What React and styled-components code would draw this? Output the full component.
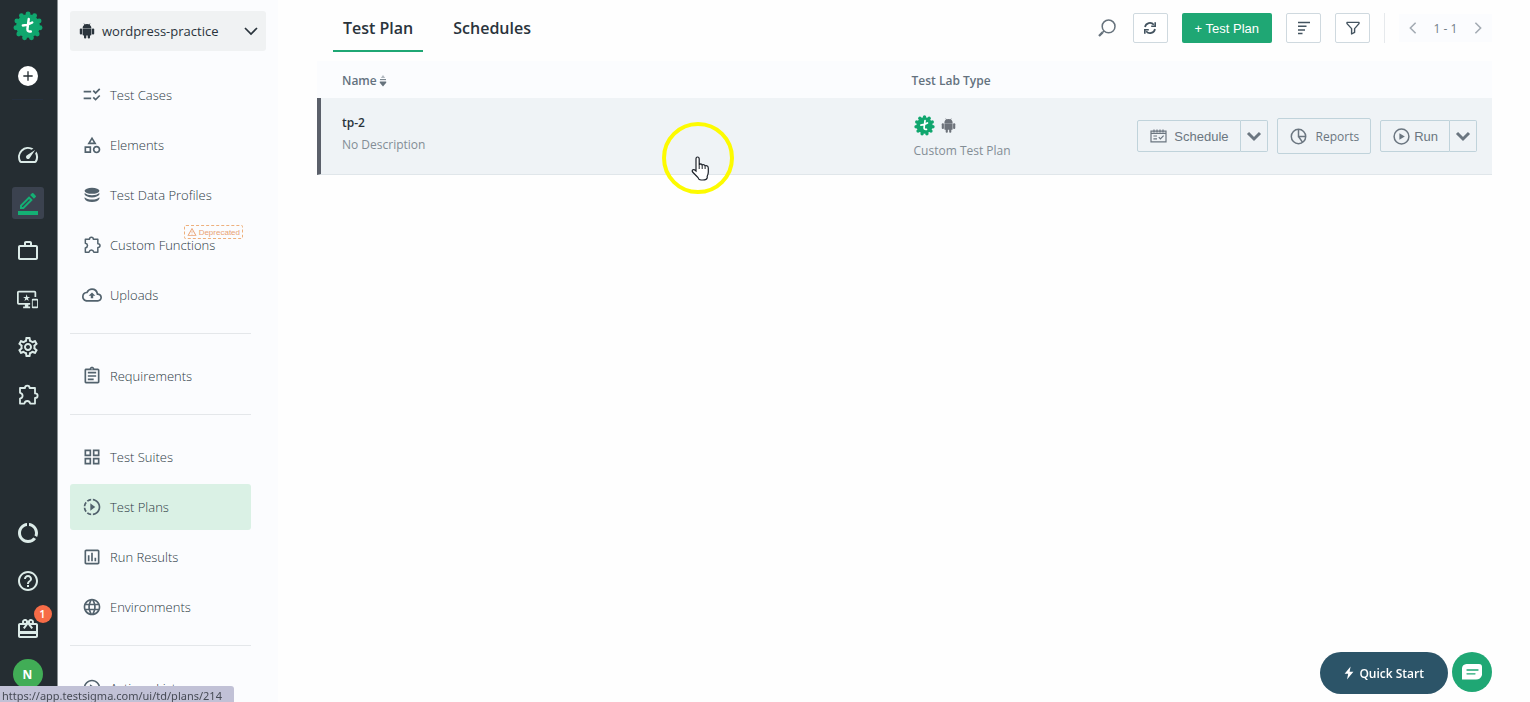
import React from 'react';
import styled, { createGlobalStyle } from 'styled-components';
import {
  MdAdd,
  MdChecklistRtl,
  MdDataUsage,
  MdGridView,
  MdHelpOutline,
  MdLanguage,
  MdOutlineAssignment,
  MdOutlineBackup,
  MdOutlineBorderColor,
  MdOutlineCardGiftcard,
  MdOutlineCategory,
  MdOutlineImportantDevices,
  MdOutlineInsertChart,
  MdOutlinePlayCircle,
  MdOutlineSettings,
  MdOutlineSlowMotionVideo,
  MdOutlineSpeed,
  MdOutlineWarningAmber,
  MdOutlineWorkOutline,
} from 'react-icons/md';

const GlobalStyle = createGlobalStyle`
*{
  box-sizing: border-box;
}
body{
  margin: 0;
  background-color: #fefefe;
  color: #2a343c;
  font-family: "Open Sans", "Noto Sans", sans-serif;
  font-size: 13px;
}
button{
  font-family: inherit;
  cursor: pointer;
}
svg{
  display: block;
  flex: none;
}
`

const LogoIcon = ({ size }) => {
  const bumps = [];
  for (let i = 0; i < 11; i++){
    const a = (i / 11) * Math.PI * 2 - Math.PI / 2;
    bumps.push(<circle key={i} cx={16 + Math.cos(a) * 13} cy={16 + Math.sin(a) * 13} r="2.6" />)
  }
  return (
    <svg width={size} height={size} viewBox="0 0 32 32" fill="#10a66e">
      <circle cx="16" cy="16" r="12.6" />
      {bumps}
      <path d="M16.8 8.5 L15.4 19 Q15.2 22.6 19 21.8 M10.5 15.4 Q16 15 20.5 12.2" fill="none" stroke="#fff" strokeWidth="2.6" strokeLinecap="round" />
    </svg>
  );
};

const AndroidIcon = ({ size }) => (
  <svg width={size} height={size} viewBox="0 0 16 16" fill="currentColor">
    <path d="M3.6 5.2 A4.4 4.2 0 0 1 12.4 5.2 Z" />
    <path d="M5 .6 L6.1 2.2 M11 .6 L9.9 2.2" stroke="currentColor" strokeWidth=".8" />
    <path d="M3.6 5.6 H12.4 V11.6 Q12.4 12.6 11.4 12.6 H4.6 Q3.6 12.6 3.6 11.6 Z" />
    <rect x=".8" y="5.6" width="2.3" height="6" rx="1" />
    <rect x="12.9" y="5.6" width="2.3" height="6" rx="1" />
    <rect x="5" y="11" width="2.3" height="4.6" rx="1" />
    <rect x="8.7" y="11" width="2.3" height="4.6" rx="1" />
  </svg>
);

const DatabaseIcon = () => (
  <svg width="20" height="20" viewBox="0 0 20 20" fill="currentColor">
    <ellipse cx="10" cy="5.8" rx="7.4" ry="3" />
    <path d="M2.6 8 Q5 10.2 10 10.2 T17.4 8 V9.6 Q15.6 12.4 10 12.4 T2.6 9.6 Z" />
    <path d="M2.6 12.2 Q5 14.6 10 14.6 T17.4 12.2 V13.8 Q15.6 17 10 17 T2.6 13.8 Z" />
  </svg>
);

const PuzzleIcon = ({ size }) => (
  <svg width={size} height={size} viewBox="0 0 24 24" fill="none" stroke="currentColor" strokeWidth="1.8" strokeLinejoin="round">
    <path d="M4 5 H9 Q9 2.6 11.3 2.6 T13.6 5 H19 V10.4 Q21.6 10.4 21.6 12.7 T19 15 V20.6 H14.2 Q13.6 18 11.3 18 T8.4 20.6 H4 V15.6 Q6.6 15 6.6 12.7 T4 9.8 Z" />
  </svg>
);

const ChevronIcon = ({ dir, size, weight }) => {
  const paths = {
    down: 'M2 5 L8 11 L14 5',
    left: 'M11 2 L5 8 L11 14',
    right: 'M5 2 L11 8 L5 14',
  };
  return (
    <svg width={size} height={size} viewBox="0 0 16 16" fill="none" stroke="currentColor" strokeWidth={weight}>
      <path d={paths[dir]} />
    </svg>
  );
};

const SearchIcon = () => (
  <svg width="20" height="20" viewBox="0 0 20 20" fill="none" stroke="#66727c" strokeWidth="1.5">
    <circle cx="11.6" cy="8.4" r="6.4" />
    <path d="M7 13 L5.4 14.6" />
    <path d="M5.6 14.4 L2 18" strokeWidth="2.2" />
  </svg>
);

const RefreshIcon = () => (
  <svg width="14" height="14" viewBox="0 0 14 14" fill="none" stroke="#43535f" strokeWidth="1.7">
    <path d="M2 6 A5 5 0 0 1 10.8 3.8 M12 8 A5 5 0 0 1 3.2 10.2" />
    <path d="M12.2 1.2 V5.2 H8.2 M1.8 12.8 V8.8 H5.8" strokeWidth="1.6" />
  </svg>
);

const SortIcon = () => (
  <svg width="14" height="14" viewBox="0 0 14 14" fill="none" stroke="#43535f" strokeWidth="1.5">
    <path d="M1 1.5 H13 M1 5.2 H9.5 M1 9 H8 M1 12.6 H5.5" />
  </svg>
);

const FilterIcon = () => (
  <svg width="14" height="14" viewBox="0 0 14 14" fill="none" stroke="#43535f" strokeWidth="1.4" strokeLinejoin="round">
    <path d="M1 1.4 H13 V2.6 L8.6 7.6 V11.4 L5.6 13 V7.6 L1 2.6 Z" />
  </svg>
);

const CalendarIcon = () => (
  <svg width="17" height="14" viewBox="0 0 17 14" fill="none" stroke="currentColor" strokeWidth="1.2">
    <path d="M1 2.2 H16 V12.8 H1 Z M1 4.4 H16" />
    <path d="M4 .4 V3.4 M7 .4 V3.4 M10 .4 V3.4 M13 .4 V3.4" />
    <path d="M3.4 7 H7 M3.4 9.8 H7 M8.8 8.2 L10.4 9.8 L13.6 6.6" />
  </svg>
);

const PieIcon = () => (
  <svg width="17" height="17" viewBox="0 0 17 17" fill="none" stroke="currentColor" strokeWidth="1.5">
    <circle cx="8.5" cy="8.5" r="7.2" />
    <path d="M8.5 1.2 V8.5 H15.8 M8.5 8.5 L12.6 14.4" />
  </svg>
);

const PlayIcon = () => (
  <svg width="17" height="17" viewBox="0 0 17 17" fill="none" stroke="currentColor" strokeWidth="1.5">
    <circle cx="8.5" cy="8.5" r="7.4" />
    <path d="M6.4 5.2 V11.8 L11.8 8.5 Z" fill="currentColor" stroke="none" />
  </svg>
);

const SortArrows = () => (
  <svg width="8" height="13" viewBox="0 0 8 13">
    <path d="M4 1 L6.2 4 H1.8 Z" fill="#b3bac1" />
    <path d="M1 5.6 H7" stroke="#77838d" strokeWidth="1.1" />
    <path d="M.8 7.4 H7.2 V8.8 L4 12.4 L.8 8.8 Z" fill="#66727c" />
  </svg>
);

const BoltIcon = () => (
  <svg width="10" height="14" viewBox="0 0 10 14" fill="#fff">
    <path d="M6.6 .6 L.6 7.8 H4.2 L3 13.4 L9.4 5.8 H5.6 Z" />
  </svg>
);

const ChatIcon = () => (
  <svg width="22" height="18" viewBox="0 0 22 18">
    <path d="M5.5 1 H18 Q21 1 21 4 V12 Q19.5 16.6 15 16.6 H1 V5 Q1.4 1.4 5.5 1 Z" fill="#fff" />
    <path d="M6 7 H17 M6 10.8 H14" stroke="#1fa774" strokeWidth="1.3" strokeLinecap="round" />
  </svg>
);

const HandIcon = () => (
  <svg width="20" height="26" viewBox="0 0 20 26">
    <path d="M5 3 Q5 1 6.5 1 Q8.2 1 8.2 3 V9.6 Q8.2 7.9 9.6 7.9 Q11 8 11.2 9.6 Q11.4 8.4 12.5 8.6 Q13.9 8.7 14.1 10.4 Q14.4 9.3 15.5 9.6 Q17.3 10 17.3 12 V16 Q17.3 18.4 16.2 20.2 V21.8 Q15.6 24 12 24 H10 Q7.6 23.8 7 21.6 L1.6 16 Q.6 14.6 2 13.8 Q3.2 13.4 5 15 Z" fill="#fff" stroke="#1b2028" strokeWidth="1.2" />
    <path d="M8.2 9.4 V13 M11.2 9.6 V13 M14.1 10.4 V13" stroke="#1b2028" strokeWidth="1" />
  </svg>
);

const railTop = [
  { label: 'Dashboard', icon: MdOutlineSpeed },
  { label: 'Create Tests', icon: MdOutlineBorderColor, active: true },
  { label: 'Projects', icon: MdOutlineWorkOutline },
  { label: 'Test Lab', icon: MdOutlineImportantDevices, size: 21 },
  { label: 'Settings', icon: MdOutlineSettings },
  { label: 'Addons', icon: PuzzleIcon },
];

const railBottom = [
  { label: 'Usage', icon: MdDataUsage },
  { label: 'Help', icon: MdHelpOutline },
  { label: 'What is new', icon: MdOutlineCardGiftcard, count: 1 },
];

const menuGroups = [
  [
    { label: 'Test Cases', icon: MdChecklistRtl },
    { label: 'Elements', icon: MdOutlineCategory },
    { label: 'Test Data Profiles', icon: DatabaseIcon },
    { label: 'Custom Functions', icon: PuzzleIcon, deprecated: true },
    { label: 'Uploads', icon: MdOutlineBackup },
  ],
  [
    { label: 'Requirements', icon: MdOutlineAssignment },
  ],
  [
    { label: 'Test Suites', icon: MdGridView },
    { label: 'Test Plans', icon: MdOutlineSlowMotionVideo, active: true },
    { label: 'Run Results', icon: MdOutlineInsertChart },
    { label: 'Environments', icon: MdLanguage },
  ],
  [
    { label: 'Actions List', icon: MdOutlinePlayCircle },
  ],
];

const RailList = ({ items }) => items.map((item) => {
  const Icon = item.icon;
  return (
    <RailSlot key={item.label}>
      <RailLink href="#" aria-label={item.label} $active={item.active}>
        <Icon size={item.size || 24} />
        {item.count && <Count>{item.count}</Count>}
      </RailLink>
    </RailSlot>
  );
});

const SideMenu = () => (
  <Side>
    <AppPicker type="button">
      <AndroidIcon size={16} />
      <AppName>wordpress-practice</AppName>
      <ChevronIcon dir="down" size={16} weight={1.7} />
    </AppPicker>
    {menuGroups.map((group, i) => (
      <MenuGroup key={i}>
        {group.map((item) => {
          const Icon = item.icon;
          return (
            <MenuLink key={item.label} href="#" $active={item.active}>
              <Icon size={20} />
              {item.label}
              {item.deprecated && <Deprecated><MdOutlineWarningAmber size={10} />Deprecated</Deprecated>}
            </MenuLink>
          );
        })}
      </MenuGroup>
    ))}
  </Side>
);

const PlanTable = () => (
  <Table>
    <thead>
      <tr>
        <Th $width="50.6%"><ThLabel>Name<SortArrows /></ThLabel></Th>
        <Th $width="17%">Test Lab Type</Th>
        <Th aria-label="Actions" />
      </tr>
    </thead>
    <tbody>
      <Row>
        <Td>
          <PlanName href="#">tp-2</PlanName>
          <Muted>No Description</Muted>
        </Td>
        <Td $padding="0 0 0 2px">
          <LabIcons><LogoIcon size={21} /><AndroidIcon size={15} /></LabIcons>
          <Muted>Custom Test Plan</Muted>
        </Td>
        <Td $padding="0 15px 0 0">
          <Actions>
            <Split>
              <ActionButton type="button"><CalendarIcon />Schedule</ActionButton>
              <ArrowButton type="button" aria-label="Schedule options"><ChevronIcon dir="down" size={16} weight={3} /></ArrowButton>
            </Split>
            <ReportsButton type="button"><PieIcon />Reports</ReportsButton>
            <Split>
              <ActionButton type="button" $tight><PlayIcon />Run</ActionButton>
              <ArrowButton type="button" aria-label="Run options"><ChevronIcon dir="down" size={16} weight={3} /></ArrowButton>
            </Split>
          </Actions>
        </Td>
      </Row>
    </tbody>
  </Table>
);

const App = () => {
  return (
    <>
      <GlobalStyle />
      <Page>
        <Rail>
          <LogoIcon size={30} />
          <AddButton type="button" aria-label="Add"><MdAdd size={16} /></AddButton>
          <RailLine />
          <RailNav><RailList items={railTop} /></RailNav>
          <RailFoot><RailList items={railBottom} /></RailFoot>
          <Avatar type="button">N</Avatar>
        </Rail>
        <SideMenu />
        <Main>
          <TopBar>
            <Tabs>
              <Tab href="#" $active>Test Plan</Tab>
              <Tab href="#">Schedules</Tab>
            </Tabs>
            <Tools>
              <SearchButton type="button" aria-label="Search"><SearchIcon /></SearchButton>
              <ToolButton type="button" aria-label="Refresh"><RefreshIcon /></ToolButton>
              <NewButton type="button">+ Test Plan</NewButton>
              <ToolButton type="button" aria-label="Sort"><SortIcon /></ToolButton>
              <ToolButton type="button" aria-label="Filter"><FilterIcon /></ToolButton>
              <ToolLine />
              <Pager>
                <PlainButton type="button" aria-label="Previous page"><ChevronIcon dir="left" size={14} weight={1.8} /></PlainButton>
                <span>1 - 1</span>
                <PlainButton type="button" aria-label="Next page"><ChevronIcon dir="right" size={14} weight={1.8} /></PlainButton>
              </Pager>
            </Tools>
          </TopBar>
          <PlanTable />
        </Main>
      </Page>
      <Floating>
        <QuickStart type="button"><BoltIcon />Quick Start</QuickStart>
        <ChatButton type="button" aria-label="Chat"><ChatIcon /></ChatButton>
      </Floating>
      <Halo />
      <Pointer><HandIcon /></Pointer>
      <StatusUrl>https://app.testsigma.com/ui/td/plans/214</StatusUrl>
    </>
  );
};

const Page = styled.div`
display: flex;
height: 100vh;
overflow: hidden;
`
const Rail = styled.nav`
display: flex;
flex-direction: column;
align-items: center;
flex: none;
width: 58px;
padding: 11px 2px 13px 0;
background-color: #252d32;
border-right: 1px solid #8b9194;
`
const AddButton = styled.button`
display: flex;
align-items: center;
justify-content: center;
width: 20px;
height: 20px;
margin-top: 25px;
padding: 0;
border: none;
border-radius: 50%;
background-color: #fff;
color: #252d32;
`
const RailLine = styled.div`
width: 31px;
height: 1px;
margin: 13px 0 31px;
background-color: #25303f;
`
const RailNav = styled.div`
display: flex;
flex-direction: column;
`
const RailFoot = styled(RailNav)`
margin-top: auto;
`
const RailSlot = styled.div`
display: flex;
align-items: center;
height: 48px;
`
const RailLink = styled.a`
position: relative;
display: flex;
align-items: center;
justify-content: center;
width: 32px;
height: 32px;
border-radius: 3px;
background-color: ${(props) => props.$active ? '#3b424f' : 'transparent'};
color: ${(props) => props.$active ? '#14b074' : '#dcebe8'};
`
const Count = styled.span`
position: absolute;
top: -8px;
right: -8px;
width: 18px;
height: 18px;
border-radius: 50%;
background-color: #f76c47;
color: #fff;
font-size: 11px;
font-weight: 600;
line-height: 18px;
text-align: center;
`
const Avatar = styled.button`
width: 30px;
height: 30px;
margin-top: 6px;
padding: 0;
border: none;
border-radius: 50%;
background-color: #41ad56;
color: #fff;
font-size: 12px;
font-weight: 700;
`
const Side = styled.aside`
flex: none;
width: 220px;
padding: 11px 12px 0;
background-color: #fbfcfe;
overflow: hidden;
`
const AppPicker = styled.button`
display: flex;
align-items: center;
gap: 7px;
width: 100%;
height: 40px;
margin-bottom: 21px;
padding: 0 7px 0 9px;
border: none;
border-radius: 3px;
background-color: #f0f2f3;
color: #2a343c;
`
const AppName = styled.span`
flex: 1;
font-size: 13px;
font-weight: 500;
text-align: left;
`
const MenuGroup = styled.div`
display: flex;
flex-direction: column;
gap: 4px;
width: 181px;
& + &{
  margin-top: 15px;
  padding-top: 19px;
  border-top: 1px solid #e4e7ea;
}
`
const MenuLink = styled.a`
position: relative;
display: flex;
align-items: center;
gap: 8px;
height: 46px;
padding-left: 12px;
border-radius: 3px;
background-color: ${(props) => props.$active ? '#daf1e5' : 'transparent'};
color: #2c3a44;
font-size: 13px;
font-weight: 300;
text-decoration: none;
& > svg{
  color: #52626d;
}
`
const Deprecated = styled.span`
position: absolute;
top: 3px;
right: 8px;
display: flex;
align-items: center;
gap: 2px;
height: 14px;
padding: 0 2px;
border: 1px dashed #eeb07c;
border-radius: 2px;
color: #e9a273;
font-family: "Liberation Sans", Arial, sans-serif;
font-size: 8px;
font-weight: 400;
`
const Main = styled.main`
flex: 1;
min-width: 0;
padding: 0 38px 0 39px;
`
const TopBar = styled.header`
display: flex;
justify-content: space-between;
height: 61px;
`
const Tabs = styled.div`
display: flex;
gap: 20px;
padding-left: 16px;
`
const Tab = styled.a`
height: 52px;
padding: 0 10px;
border-bottom: 2px solid ${(props) => props.$active ? '#1fa774' : 'transparent'};
color: #2a343c;
font-size: 16px;
font-weight: 600;
line-height: 56px;
text-decoration: none;
`
const Tools = styled.div`
display: flex;
align-items: center;
gap: 14px;
height: 56px;
`
const PlainButton = styled.button`
padding: 0;
border: none;
background: none;
color: #a3abb3;
`
const SearchButton = styled(PlainButton)`
padding-right: 2px;
`
const ToolButton = styled.button`
display: flex;
align-items: center;
justify-content: center;
width: 35px;
height: 30px;
padding: 0;
border: 1px solid #cfd9df;
border-radius: 2px;
background-color: #fff;
`
const NewButton = styled.button`
height: 30px;
padding: 0 13px;
border: none;
border-radius: 2px;
background-color: #1fa774;
color: #fff;
font-family: "Liberation Sans", Arial, sans-serif;
font-size: 13px;
`
const ToolLine = styled.div`
width: 1px;
height: 30px;
background-color: #e6e9ec;
`
const Pager = styled.div`
display: flex;
align-items: center;
justify-content: space-between;
width: 93px;
height: 28px;
padding: 0 7px;
background-color: #fbfcfe;
color: #737e88;
font-size: 12px;
`
const Table = styled.table`
width: 100%;
border-collapse: separate;
border-spacing: 0;
table-layout: fixed;
`
const Th = styled.th`
width: ${(props) => props.$width || 'auto'};
height: 37px;
padding: 2px 0 0;
background-color: #fbfcfe;
color: #64727e;
font-size: 12px;
font-weight: 600;
text-align: left;
&:first-child{
  padding-left: 25px;
}
`
const ThLabel = styled.span`
display: flex;
align-items: center;
gap: 2px;
`
const Td = styled.td`
height: 77px;
padding: ${(props) => props.$padding || '0 0 4px'};
border-bottom: 1px solid #e0e6ea;
&:first-child{
  padding-left: 21px;
  border-left: 4px solid #5b606a;
}
`
const Row = styled.tr`
background-color: #eff3f6;
`
const PlanName = styled.a`
display: block;
color: #2a343c;
font-size: 12px;
font-weight: 600;
line-height: 22px;
text-decoration: none;
`
const Muted = styled.div`
color: #838d95;
font-size: 12px;
line-height: 22px;
`
const LabIcons = styled.div`
display: flex;
align-items: center;
gap: 6px;
height: 30px;
color: #6d727a;
`
const Actions = styled.div`
display: flex;
align-items: center;
justify-content: flex-end;
gap: 9px;
color: #6b7680;
`
const Split = styled.div`
display: flex;
`
const ActionButton = styled.button`
display: flex;
align-items: center;
gap: ${(props) => props.$tight ? '4px' : '7px'};
height: 32px;
padding: 0 11px 0 12px;
border: 1px solid #c0d3db;
border-radius: 2px 0 0 2px;
background: none;
color: inherit;
font-family: "Liberation Sans", Arial, sans-serif;
font-size: 13px;
`
const ArrowButton = styled(ActionButton)`
padding: 0 5px;
border-left: none;
border-radius: 0 2px 2px 0;
`
const ReportsButton = styled(ActionButton)`
gap: 9px;
height: 36px;
border-radius: 2px;
font-family: inherit;
font-size: 12px;
`
const Floating = styled.div`
position: fixed;
right: 38px;
bottom: 8px;
display: flex;
gap: 4px;
`
const QuickStart = styled.button`
display: flex;
align-items: center;
justify-content: center;
gap: 5px;
height: 42px;
padding: 0 24px;
border: none;
border-radius: 21px;
background-color: #2c5468;
color: #fff;
font-size: 12px;
font-weight: 600;
`
const ChatButton = styled.button`
display: flex;
align-items: center;
justify-content: center;
width: 40px;
height: 40px;
padding: 0;
border: none;
border-radius: 50%;
background-color: #1fa774;
`
const Halo = styled.div`
position: fixed;
top: 122px;
left: 662px;
width: 72px;
height: 72px;
border: 4px solid #fdfb00;
border-radius: 50%;
pointer-events: none;
`
const Pointer = styled.div`
position: fixed;
top: 156px;
left: 691px;
pointer-events: none;
`
const StatusUrl = styled.div`
position: fixed;
bottom: 0;
left: 0;
height: 16px;
padding: 0 12px 0 2px;
border-radius: 0 3px 0 0;
background-color: #c1c1d6;
color: #474b55;
font-family: "Noto Sans", "Open Sans", sans-serif;
font-size: 11px;
line-height: 20px;
`

export default App;
